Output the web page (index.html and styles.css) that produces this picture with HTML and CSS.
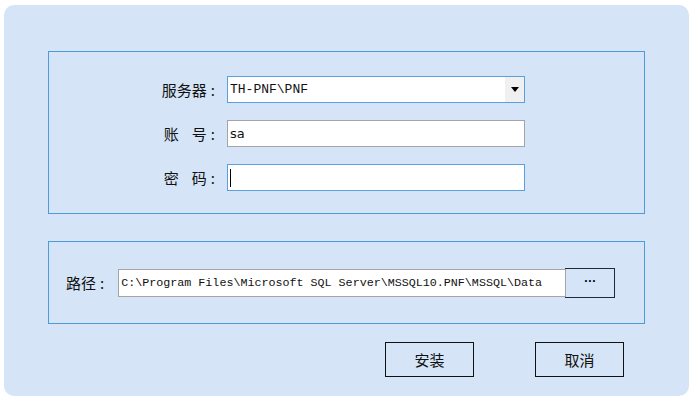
FILE: index.html
```html
<!DOCTYPE html>
<html lang="zh-CN">
<head>
    <meta charset="UTF-8">
    <title>安装</title>
    <link rel="stylesheet" href="styles.css">
</head>
<body>

<div class="panel">
    <div class="group login">
        <div class="row">
            <label class="label">服务器<span class="colon">:</span></label>
            <div class="field combo">
                <span class="value serif">TH-PNF\PNF</span>
                <span class="drop"><span class="arrow"></span></span>
            </div>
        </div>
        <div class="row">
            <label class="label">账<span class="pad"></span>号<span class="colon">:</span></label>
            <div class="field plain">
                <span class="value sans">sa</span>
            </div>
        </div>
        <div class="row">
            <label class="label">密<span class="pad"></span>码<span class="colon">:</span></label>
            <div class="field focus">
                <span class="caret"></span>
            </div>
        </div>
    </div>

    <div class="group path">
        <label class="label">路径<span class="colon">:</span></label>
        <div class="field plain wide">
            <span class="value mono">C:\Program Files\Microsoft SQL Server\MSSQL10.PNF\MSSQL\Data</span>
        </div>
        <button class="browse">···</button>
    </div>

    <div class="actions">
        <button class="btn">安装</button>
        <button class="btn">取消</button>
    </div>
</div>

</body>
</html>
```

FILE: styles.css
```css
body {
    margin: 0;
    background-color: #fff;
    font-family: "Noto Sans CJK SC", "Liberation Sans", sans-serif;
    font-size: 15px;
    color: #111;
}
.panel {
    box-sizing: border-box;
    width: 685px;
    height: 391px;
    margin: 5px 0 0 4px;
    padding: 46px 44px 0;
    background-color: #d5e5f7;
    border-radius: 10px;
}
.group {
    box-sizing: border-box;
    border: 1px solid #4d9bd9;
}
.login {
    height: 163px;
    padding: 24px 0 0 108px;
    display: flex;
    flex-direction: column;
    gap: 17px;
}
.row {
    display: flex;
    align-items: center;
    height: 27px;
}
.label {
    width: 61px;
    margin-right: 9px;
    text-align: right;
    line-height: 27px;
    white-space: nowrap;
}
.colon {
    margin-left: 4px;
    margin-right: 3px;
}
.pad {
    display: inline-block;
    width: 13px;
}
.field {
    box-sizing: border-box;
    width: 298px;
    height: 27px;
    background-color: #fff;
    display: flex;
    align-items: center;
    padding-left: 2px;
    position: relative;
}
.combo, .focus {
    border: 1px solid #5a9fe0;
}
.plain {
    border: 1px solid #a5a5a5;
}
.value {
    white-space: nowrap;
}
.serif {
    font-family: "Liberation Mono", monospace;
    font-size: 13px;
}
.sans {
    font-family: "DejaVu Sans", sans-serif;
    font-size: 13px;
}
.mono {
    font-family: "Liberation Mono", monospace;
    font-size: 11.7px;
}
.drop {
    position: absolute;
    right: 0;
    top: 0;
    bottom: 0;
    width: 19px;
    background-color: #f0f0f0;
    display: flex;
    align-items: center;
    justify-content: center;
}
.arrow {
    width: 0;
    height: 0;
    border-left: 4px solid transparent;
    border-right: 4px solid transparent;
    border-top: 5px solid #000;
}
.caret {
    width: 1px;
    height: 18px;
    background-color: #000;
}
.path {
    height: 83px;
    margin-top: 27px;
    padding: 0 0 0 17px;
    display: flex;
    align-items: center;
}
.path .label {
    width: auto;
    margin-right: 11px;
}
.path .field {
    height: 28px;
}
.wide {
    width: 448px;
}
.browse {
    box-sizing: border-box;
    width: 50px;
    height: 30px;
    margin-left: -1px;
    border: 1px solid #1c2b3a;
    background-color: #d5e5f7;
    font-family: "Liberation Sans", sans-serif;
    font-size: 12px;
    font-weight: bold;
    padding: 0 0 4px;
}
.actions {
    display: flex;
    justify-content: flex-end;
    gap: 61px;
    margin-top: 18px;
    padding-right: 21px;
}
.btn {
    box-sizing: border-box;
    width: 89px;
    height: 35px;
    border: 1px solid #111;
    background-color: #d5e5f7;
    font-family: "Noto Sans CJK SC", sans-serif;
    font-size: 15px;
    color: #111;
    padding: 0;
}
```
